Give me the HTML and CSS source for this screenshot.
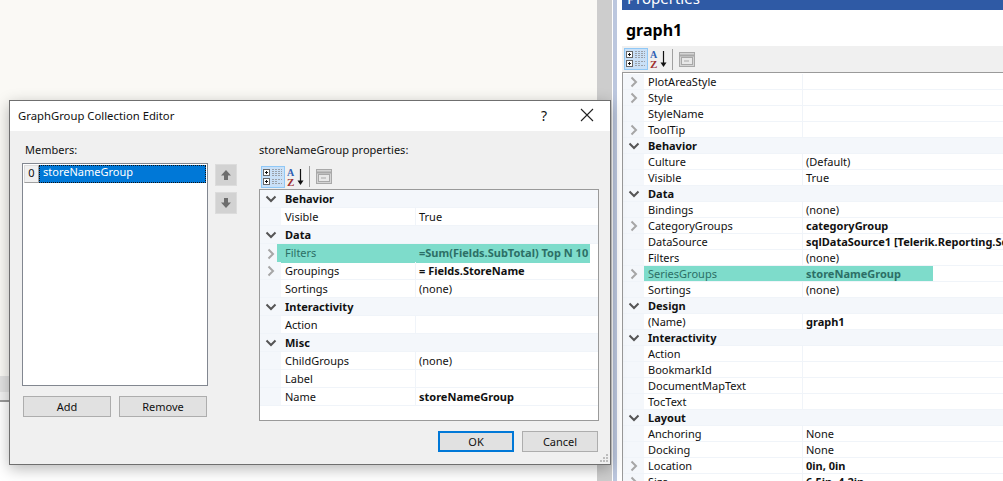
FILE: index.html
```html
<!DOCTYPE html>
<html lang="en">
    <head>
        <meta charset="UTF-8">
        <meta name="viewport" content="width=device-width, initial-scale=1.0">
        <title>GraphGroup Collection Editor</title>
        <link rel="stylesheet" href="styles.css">
    </head>
    <body>
        <svg class="icon-defs" width="0" height="0" aria-hidden="true">
            <symbol id="icon-categorized" viewBox="0 0 20 18">
                <rect x="0.5" y="1.5" width="6" height="6" fill="#fff" stroke="#666"/>
                <path d="M2 4.5h3M3.5 3v3" stroke="#111"/>
                <rect x="0.5" y="10.5" width="6" height="6" fill="#fff" stroke="#666"/>
                <path d="M2 13.5h3M3.5 12v3" stroke="#111"/>
                <path d="M9 1.5h10M9 3.5h10M9 5.5h10M9 7.5h10M9 11.5h10M9 13.5h6M9 15.5h10" stroke="#9aa0a8" stroke-dasharray="2 1"/>
            </symbol>
            <symbol id="icon-alpha" viewBox="0 0 18 18">
                <text x="0" y="8" class="icon-letter-a">A</text>
                <text x="0" y="18" class="icon-letter-z">Z</text>
                <path d="M13.5 1v14" stroke="#111" stroke-width="1.2"/>
                <path d="M10.5 12.5h6l-3 4.5z" fill="#111"/>
            </symbol>
            <symbol id="icon-pages" viewBox="0 0 16 15">
                <rect x="0.5" y="0.5" width="15" height="14" fill="#d4d4d4" stroke="#a8a8a8"/>
                <path d="M1 3.5h14" stroke="#a8a8a8" stroke-width="2"/>
                <rect x="2.5" y="5.5" width="11" height="7" fill="#e8e8e8" stroke="#a8a8a8"/>
                <path d="M5 9h5" stroke="#a8a8a8"/>
            </symbol>
            <symbol id="chevron-down" viewBox="0 0 12 8">
                <path d="M1.5 1.5 6 6l4.5-4.5" fill="none" stroke="#555" stroke-width="2"/>
            </symbol>
            <symbol id="chevron-right" viewBox="0 0 8 12">
                <path d="M1.5 1.5 6 6l-4.5 4.5" fill="none" stroke="#a6a6a6" stroke-width="2"/>
            </symbol>
        </svg>

        <div class="workspace">
            <div class="designer">
                <div class="canvas"></div>
                <div class="band-dark"></div>
                <div class="band-light"></div>
                <div class="band-line"></div>
                <div class="band-white"></div>
            </div>
            <div class="scrollbar"></div>
            <div class="splitter"></div>

            <aside class="properties">
                <div class="pane-title"><span>Properties</span></div>
                <h2 class="object-name">graph1</h2>
                <div class="toolbar toolbar-pane">
                    <button class="tool tool-active"><svg width="20" height="18"><use href="#icon-categorized"/></svg></button>
                    <button class="tool"><svg width="18" height="18"><use href="#icon-alpha"/></svg></button>
                    <span class="tool-sep"></span>
                    <button class="tool tool-pages"><svg width="16" height="15"><use href="#icon-pages"/></svg></button>
                </div>
                <div class="grid grid-pane">
                    <div class="row"><span class="toggle"><svg width="8" height="12"><use href="#chevron-right"/></svg></span><span class="name">PlotAreaStyle</span><span class="value"></span></div>
                    <div class="row"><span class="toggle"><svg width="8" height="12"><use href="#chevron-right"/></svg></span><span class="name">Style</span><span class="value"></span></div>
                    <div class="row"><span class="toggle"></span><span class="name">StyleName</span><span class="value"></span></div>
                    <div class="row"><span class="toggle"><svg width="8" height="12"><use href="#chevron-right"/></svg></span><span class="name">ToolTip</span><span class="value"></span></div>
                    <div class="row row-cat"><span class="toggle"><svg width="12" height="8"><use href="#chevron-down"/></svg></span><span class="name">Behavior</span></div>
                    <div class="row"><span class="toggle"></span><span class="name">Culture</span><span class="value">(Default)</span></div>
                    <div class="row"><span class="toggle"></span><span class="name">Visible</span><span class="value">True</span></div>
                    <div class="row row-cat"><span class="toggle"><svg width="12" height="8"><use href="#chevron-down"/></svg></span><span class="name">Data</span></div>
                    <div class="row"><span class="toggle"></span><span class="name">Bindings</span><span class="value">(none)</span></div>
                    <div class="row"><span class="toggle"><svg width="8" height="12"><use href="#chevron-right"/></svg></span><span class="name">CategoryGroups</span><span class="value value-set">categoryGroup</span></div>
                    <div class="row"><span class="toggle"></span><span class="name">DataSource</span><span class="value value-set">sqlDataSource1 [Telerik.Reporting.SqlDataSource]</span></div>
                    <div class="row"><span class="toggle"></span><span class="name">Filters</span><span class="value">(none)</span></div>
                    <div class="row row-mark"><span class="toggle"><svg width="8" height="12"><use href="#chevron-right"/></svg></span><span class="name">SeriesGroups</span><span class="value value-set">storeNameGroup</span></div>
                    <div class="row"><span class="toggle"></span><span class="name">Sortings</span><span class="value">(none)</span></div>
                    <div class="row row-cat"><span class="toggle"><svg width="12" height="8"><use href="#chevron-down"/></svg></span><span class="name">Design</span></div>
                    <div class="row"><span class="toggle"></span><span class="name">(Name)</span><span class="value value-set">graph1</span></div>
                    <div class="row row-cat"><span class="toggle"><svg width="12" height="8"><use href="#chevron-down"/></svg></span><span class="name">Interactivity</span></div>
                    <div class="row"><span class="toggle"></span><span class="name">Action</span><span class="value"></span></div>
                    <div class="row"><span class="toggle"></span><span class="name">BookmarkId</span><span class="value"></span></div>
                    <div class="row"><span class="toggle"></span><span class="name">DocumentMapText</span><span class="value"></span></div>
                    <div class="row"><span class="toggle"></span><span class="name">TocText</span><span class="value"></span></div>
                    <div class="row row-cat"><span class="toggle"><svg width="12" height="8"><use href="#chevron-down"/></svg></span><span class="name">Layout</span></div>
                    <div class="row"><span class="toggle"></span><span class="name">Anchoring</span><span class="value">None</span></div>
                    <div class="row"><span class="toggle"></span><span class="name">Docking</span><span class="value">None</span></div>
                    <div class="row"><span class="toggle"><svg width="8" height="12"><use href="#chevron-right"/></svg></span><span class="name">Location</span><span class="value value-set">0in, 0in</span></div>
                    <div class="row"><span class="toggle"><svg width="8" height="12"><use href="#chevron-right"/></svg></span><span class="name">Size</span><span class="value value-set">6.5in, 4.2in</span></div>
                </div>
            </aside>
        </div>

        <!-- floating dialog window -->
        <section class="dialog">
            <header class="dialog-title">
                <h1>GraphGroup Collection Editor</h1>
                <span class="help">?</span>
                <svg class="close" width="14" height="14" viewBox="0 0 14 14"><path d="M1 1l12 12M13 1 1 13" stroke="#222" stroke-width="1.1"/></svg>
            </header>
            <div class="dialog-body">
                <div class="members">
                    <label class="field-label">Members:</label>
                    <div class="members-row">
                        <div class="members-col">
                            <div class="listbox">
                                <div class="list-item"><span class="list-index">0</span><span class="list-text">storeNameGroup</span></div>
                            </div>
                            <div class="member-buttons">
                                <button class="btn btn-wide">Add</button>
                                <button class="btn btn-wide">Remove</button>
                            </div>
                        </div>
                        <div class="move-buttons">
                            <button class="move-btn"><svg width="12" height="12" viewBox="0 0 12 12"><path d="M6 1 11 6.5H8V11H4V6.5H1z" fill="#6d6d6d"/></svg></button>
                            <button class="move-btn"><svg width="12" height="12" viewBox="0 0 12 12"><path d="M6 11 1 5.5H4V1H8V5.5H11z" fill="#6d6d6d"/></svg></button>
                        </div>
                    </div>
                </div>
                <div class="props">
                    <label class="field-label">storeNameGroup properties:</label>
                    <div class="toolbar toolbar-dialog">
                        <button class="tool tool-active"><svg width="20" height="18"><use href="#icon-categorized"/></svg></button>
                        <button class="tool"><svg width="18" height="18"><use href="#icon-alpha"/></svg></button>
                        <span class="tool-sep"></span>
                        <button class="tool tool-pages"><svg width="16" height="15"><use href="#icon-pages"/></svg></button>
                    </div>
                    <div class="grid grid-dialog">
                        <div class="row row-cat"><span class="toggle"><svg width="12" height="8"><use href="#chevron-down"/></svg></span><span class="name">Behavior</span></div>
                        <div class="row"><span class="toggle"></span><span class="name">Visible</span><span class="value">True</span></div>
                        <div class="row row-cat"><span class="toggle"><svg width="12" height="8"><use href="#chevron-down"/></svg></span><span class="name">Data</span></div>
                        <div class="row row-mark"><span class="toggle"><svg width="8" height="12"><use href="#chevron-right"/></svg></span><span class="name">Filters</span><span class="value value-set">=Sum(Fields.SubTotal) Top N 10</span></div>
                        <div class="row"><span class="toggle"><svg width="8" height="12"><use href="#chevron-right"/></svg></span><span class="name">Groupings</span><span class="value value-set">= Fields.StoreName</span></div>
                        <div class="row"><span class="toggle"></span><span class="name">Sortings</span><span class="value">(none)</span></div>
                        <div class="row row-cat"><span class="toggle"><svg width="12" height="8"><use href="#chevron-down"/></svg></span><span class="name">Interactivity</span></div>
                        <div class="row"><span class="toggle"></span><span class="name">Action</span><span class="value"></span></div>
                        <div class="row row-cat"><span class="toggle"><svg width="12" height="8"><use href="#chevron-down"/></svg></span><span class="name">Misc</span></div>
                        <div class="row"><span class="toggle"></span><span class="name">ChildGroups</span><span class="value">(none)</span></div>
                        <div class="row"><span class="toggle"></span><span class="name">Label</span><span class="value"></span></div>
                        <div class="row"><span class="toggle"></span><span class="name">Name</span><span class="value value-set">storeNameGroup</span></div>
                    </div>
                </div>
            </div>
            <footer class="dialog-footer">
                <button class="btn btn-footer btn-default">OK</button>
                <button class="btn btn-footer">Cancel</button>
            </footer>
            <svg class="grip" width="9" height="9" viewBox="0 0 9 9"><path d="M6 0h2v2H6zM3 3h2v2H3zM6 3h2v2H6zM0 6h2v2H0zM3 6h2v2H3zM6 6h2v2H6z" fill="#bdbdbd"/></svg>
        </section>
    </body>
</html>
```

FILE: styles.css
```css
* {
    box-sizing: border-box;
}
html, body {
    margin: 0;
    height: 100%;
    overflow: hidden;
}
body {
    font-family: "Noto Sans", "Open Sans", Arial, sans-serif;
    font-size: 11px;
    color: #111;
    background-color: #fff;
}
button {
    font: inherit;
    color: inherit;
    padding: 0;
}
.icon-defs {
    display: none;
}
.icon-letter-a {
    font: bold 10px "Liberation Serif", serif;
    fill: #2f5fb3;
}
.icon-letter-z {
    font: bold 11px "Liberation Serif", serif;
    fill: #a03030;
}

/* background: designer, scrollbar and properties pane */
.workspace {
    display: flex;
    height: 481px;
}
.designer {
    width: 597px;
    display: flex;
    flex-direction: column;
}
.canvas {
    height: 376px;
    background-color: #faf9f5;
}
.band-dark {
    height: 16px;
    background-color: #e2e2e2;
}
.band-light {
    height: 8px;
    background-color: #f1f1f1;
}
.band-line {
    height: 2px;
    background-color: #9a9a9a;
}
.band-white {
    flex: 1;
    background-color: #fff;
}
.scrollbar {
    width: 15px;
    background-color: #cdcdcd;
}
.splitter {
    width: 10px;
    background: linear-gradient(to right, #fff 1px, #bcc7de 1px, #bcc7de 5px, #fff 5px);
}
.properties {
    width: 381px;
    display: flex;
    flex-direction: column;
}
.pane-title {
    height: 10px;
    overflow: hidden;
    padding-left: 5px;
    background-color: #2f5aa5;
    color: #fff;
    font-size: 15px;
    line-height: 20px;
}
.pane-title span {
    display: block;
    margin-top: -12px;
}
.object-name {
    margin: 0;
    height: 36px;
    padding: 9px 0 0 4px;
    font-size: 16px;
    line-height: 22px;
    font-weight: bold;
    color: #000;
}

/* toolbar */
.toolbar {
    display: flex;
    align-items: center;
    background-color: #f0f0f0;
}
.toolbar-pane {
    height: 26px;
    padding-left: 2px;
}
.toolbar-dialog {
    height: 23px;
    margin-bottom: 1px;
    padding-left: 2px;
}
.tool {
    width: 24px;
    height: 22px;
    display: flex;
    align-items: center;
    justify-content: center;
    border: 1px solid transparent;
    background: none;
}
.tool + .tool {
    width: 22px;
}
.tool-active {
    background-color: #c9e0f7;
    border-color: #90c8f6;
}
.tool-sep {
    width: 1px;
    height: 21px;
    margin: 0 5px 0 2px;
    background-color: #a0a0a0;
}
.toolbar .tool-pages {
    width: 18px;
}

/* property grid */
.grid {
    background-color: #fff;
    border: 1px solid #9a9a9a;
    overflow: hidden;
}
.grid-pane {
    flex: 1;
    padding-top: 1px;
    border-bottom: 0;
    border-right: 0;
    --row-h: 16px;
    --gutter: 21px;
    --name-w: 159px;
}
.grid-dialog {
    height: 232px;
    --row-h: 18px;
    --gutter: 21px;
    --name-w: 135px;
}
.row {
    display: flex;
    height: var(--row-h);
    line-height: calc(var(--row-h) - 1px);
    border-bottom: 1px solid #f0f4f9;
    white-space: nowrap;
}
.toggle {
    flex: none;
    width: var(--gutter);
    display: flex;
    align-items: center;
    justify-content: center;
    background-color: #f4f7fb;
}
.name {
    flex: none;
    width: var(--name-w);
    padding-left: 4px;
    border-right: 1px solid #f0f4f9;
}
.value {
    flex: 1;
    padding-left: 3px;
}
.value-set {
    font-weight: bold;
}
.row-cat {
    background-color: #f4f7fb;
    font-weight: bold;
}
.row-cat .name {
    border-right: 0;
}
.row-mark .name,
.row-mark .value {
    border-right: 0;
    color: #2c6f66;
}
.grid-pane .row-mark {
    background: linear-gradient(#7edccb, #7edccb) no-repeat 21px 0 / 289px 100%;
}
.grid-pane .row-mark .toggle {
    background-color: #f4f7fb;
}
.grid-dialog .row-mark {
    height: 19px;
    margin-bottom: -1px;
    border-bottom: 0;
    line-height: 18px;
    background: linear-gradient(#7edccb, #7edccb) no-repeat 17px 0 / 313px 100%;
}
.grid-dialog .row-mark .toggle {
    background: linear-gradient(to right, #f4f7fb 17px, transparent 17px);
}

/* dialog window */
.dialog {
    position: absolute;
    left: 9px;
    top: 100px;
    width: 602px;
    height: 365px;
    display: flex;
    flex-direction: column;
    background-color: #f0f0f0;
    border: 1px solid #6f6f6f;
    box-shadow: 0 4px 14px rgba(0, 0, 0, 0.28);
}
.dialog-title {
    flex: none;
    height: 30px;
    display: flex;
    align-items: center;
    padding: 0 16px 2px 8px;
    background-color: #fff;
}
.dialog-title h1 {
    flex: 1;
    margin: 0;
    font-size: 11.3px;
    font-weight: normal;
}
.help {
    font-size: 14px;
    margin-right: 33px;
}
.dialog-body {
    display: flex;
    padding: 12px 11px 0 12px;
}
.members {
    width: 215px;
    flex: none;
}
.field-label {
    display: block;
    height: 14px;
    line-height: 14px;
    margin-left: 3px;
    margin-bottom: 6px;
}
.props .field-label {
    margin-left: 0;
    margin-bottom: 8px;
}
.members-row {
    display: flex;
    gap: 7px;
}
.members-col {
    width: 186px;
}
.listbox {
    height: 223px;
    padding: 1px;
    background-color: #fff;
    border: 1px solid #828790;
}
.list-item {
    display: flex;
    height: 18px;
    line-height: 14px;
}
.list-index {
    width: 15px;
    text-align: center;
    background-color: #f0f0f0;
    border: 1px solid #dcdcdc;
    border-right-color: #a0a0a0;
    border-bottom-color: #a0a0a0;
}
.list-text {
    flex: 1;
    padding-left: 4px;
    background-color: #0078d7;
    color: #fff;
    outline: 1px dotted #111;
    outline-offset: -1px;
}
.member-buttons {
    display: flex;
    justify-content: space-between;
    margin: 10px 1px 0;
}
.btn {
    height: 21px;
    background-color: #e1e1e1;
    border: 1px solid #adadad;
}
.btn-wide {
    width: 88px;
}
.move-buttons {
    display: flex;
    flex-direction: column;
    gap: 6px;
    margin-top: 1px;
}
.move-btn {
    width: 22px;
    height: 22px;
    display: flex;
    align-items: center;
    justify-content: center;
    background-color: #d2d2d2;
    border: 1px solid #dcdcdc;
}
.props {
    width: 340px;
    margin-left: 22px;
    flex: none;
}
.dialog-footer {
    display: flex;
    justify-content: flex-end;
    gap: 8px;
    padding: 10px 12px 0 0;
}
.btn-footer {
    width: 76px;
}
.btn-default {
    border: 2px solid #0078d7;
}
.grip {
    position: absolute;
    right: 1px;
    bottom: 1px;
}
```
